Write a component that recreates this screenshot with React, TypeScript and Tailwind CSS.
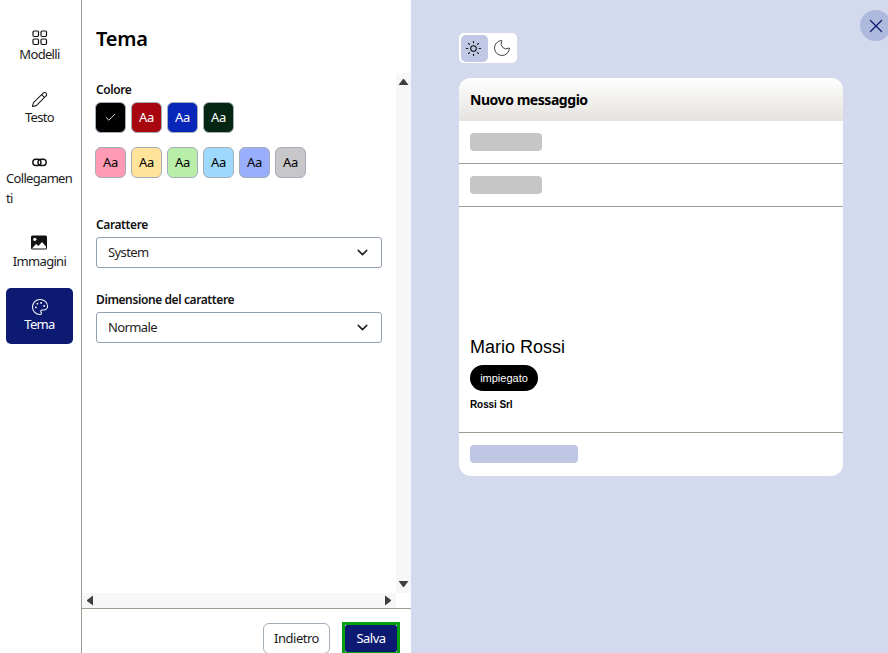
import React from "react";
import { Pencil, Palette, ChevronDown, Check, Sun, Moon, X } from "lucide-react";

const font = "font-['Noto_Sans','Open_Sans',sans-serif]";

function GridIcon() {
  return (
    <svg width="17" height="17" viewBox="0 0 17 17" fill="none" stroke="#111" strokeWidth="1.2" className="mb-[-2px]">
      <rect x="2" y="2" width="5.5" height="5.5" rx="1.2" />
      <rect x="10" y="2" width="5.5" height="5.5" rx="1.2" />
      <rect x="2" y="10" width="5.5" height="5.5" rx="1.2" />
      <rect x="10" y="10" width="5.5" height="5.5" rx="1.2" />
    </svg>
  );
}

function LinkIcon() {
  return (
    <svg width="17" height="17" viewBox="0 0 17 17" fill="none" stroke="#111" strokeWidth="1.4" className="mt-[2px] mb-[-3px]">
      <rect x="1.8" y="5.2" width="8.2" height="6.3" rx="3.1" />
      <rect x="7" y="5.2" width="8.2" height="6.3" rx="3.1" />
    </svg>
  );
}

function ImageIcon() {
  return (
    <svg width="18" height="18" viewBox="0 0 18 18" className="mt-[1px] mb-[-1px] ml-[-1px]">
      <rect x="1" y="1.5" width="16" height="14" rx="1.5" fill="#111" />
      <circle cx="4.8" cy="5.3" r="1.6" fill="#fff" />
      <path d="M2 14.5 L6 10 L8.5 12 L12 8 L16 12.5 L16 14.5 Z" fill="#fff" />
    </svg>
  );
}

function Nav({ icon, label, active, h }: { icon: React.ReactNode; label: string; active?: boolean; h: string }) {
  return (
    <div className={`${h} w-[67px] flex flex-col items-center justify-start rounded-[5px] text-[13px] leading-[20px] tracking-[-0.68px] text-left break-all ${active ? "bg-[#0c1a72] text-white" : "text-[#1c1c1c]"}`}>
      {icon}
      <span>{label}</span>
    </div>
  );
}

function Swatch({ bg, fg, checked }: { bg: string; fg: string; checked?: boolean }) {
  return (
    <div className={`w-[31px] h-[31px] rounded-[6px] border border-[#a3adb8] flex items-center justify-center text-[13px] tracking-[-0.2px] ${bg} ${fg}`}>
      {checked ? <Check size={13} strokeWidth={1.6} /> : "Aa"}
    </div>
  );
}

function Select({ value }: { value: string }) {
  return (
    <div className="w-[286px] h-[31px] rounded-[3px] border border-[#929fae] flex items-center justify-between pl-[11px] pr-[10px] text-[13px] tracking-[-0.6px] text-[#1f1f1f]">
      <span>{value}</span>
      <ChevronDown size={17} strokeWidth={2.2} className="text-[#222]" />
    </div>
  );
}

function Arrow({ dir }: { dir: "up" | "down" | "left" | "right" }) {
  const p =
    dir === "up"
      ? "0.5,9 5,3 6,3 10.5,9"
      : dir === "down"
        ? "0.5,2 10.5,2 6,8 5,8"
        : dir === "left"
          ? "9,0.5 9,10.5 3,6 3,5"
          : "2,0.5 2,10.5 8,6 8,5";
  return (
    <svg width="11" height="11" viewBox="0 0 11 11">
      <polygon points={p} fill="#3f3f3f" />
    </svg>
  );
}

function Row({ className = "" }: { className?: string }) {
  return <div className={`h-[18px] rounded-[4px] ${className}`} />;
}

export default function App() {
  const label = "text-[12px] leading-[17px] font-semibold text-[#111] tracking-[-0.4px]";
  return (
    <div className={`${font} relative w-[888px] h-[653px] flex bg-white overflow-hidden`}>
      <aside className="w-[82px] h-full border-r border-[#a09c92] flex flex-col items-start pl-[6px] pt-[29px] shrink-0">
        <Nav h="h-[60px]" label="Modelli" icon={<GridIcon />} />
        <Nav h="h-[63px]" label="Testo" icon={<Pencil size={17} strokeWidth={1.5} className="mt-[2px] mb-[-1px]" />} />
        <Nav h="h-[81px]" label="Collegamenti" icon={<LinkIcon />} />
        <Nav h="h-[55px]" label="Immagini" icon={<ImageIcon />} />
        <div>
          <Nav h="h-[56px] pt-[10px]" active label="Tema" icon={<Palette size={18} strokeWidth={1.4} className="mb-[-2px]" />} />
        </div>
      </aside>

      <main className="w-[329px] h-full flex flex-col shrink-0">
        <div className="h-[73px] shrink-0 pl-[14px] pt-[25px] text-[20px] leading-[28px] font-semibold text-black tracking-[-0.25px]">Tema</div>
        <div className="flex h-[520px] shrink-0">
          <div className="w-[314px] pl-[14px]">
            <div className={`${label} pt-[8px]`}>Colore</div>
            <div className="flex gap-[5px] mt-[4px] ml-[-1px]">
              <Swatch bg="bg-black" fg="text-white" checked />
              <Swatch bg="bg-[#a80710]" fg="text-white" />
              <Swatch bg="bg-[#0826b8]" fg="text-white" />
              <Swatch bg="bg-[#052612]" fg="text-white" />
            </div>
            <div className="flex gap-[5px] mt-[14px] ml-[-1px]">
              <Swatch bg="bg-[#ff9ab5]" fg="text-black" />
              <Swatch bg="bg-[#ffe49a]" fg="text-black" />
              <Swatch bg="bg-[#b9eea8]" fg="text-black" />
              <Swatch bg="bg-[#9ed8fd]" fg="text-black" />
              <Swatch bg="bg-[#99aefc]" fg="text-black" />
              <Swatch bg="bg-[#c7c6c8]" fg="text-black" />
            </div>
            <div className={`${label} mt-[38px] mb-[4px]`}>Carattere</div>
            <Select value="System" />
            <div className={`${label} mt-[23px] mb-[4px]`}>Dimensione del carattere</div>
            <Select value="Normale" />
          </div>
          <div className="w-[15px] bg-[#f7f7f7] flex flex-col items-center justify-between py-[3px]">
            <Arrow dir="up" />
            <Arrow dir="down" />
          </div>
        </div>
        <div className="h-[15px] shrink-0 w-[314px] bg-[#f7f7f7] flex items-center justify-between pl-[2px] pr-[2px]">
          <Arrow dir="left" />
          <Arrow dir="right" />
        </div>
        <div className="flex-1 min-h-0 overflow-hidden border-t border-[#a09c92] flex justify-end items-start pt-[14px] pr-[11px] gap-[12px]">
          <div className="w-[67px] h-[31px] shrink-0 rounded-[6px] border border-[#a3adb8] flex items-center justify-center text-[13px] tracking-[-0.5px] text-[#1c1c1c] bg-white">Indietro</div>
          <div className="w-[58px] h-[33px] shrink-0 mt-[-1px] border-[3px] border-[#07a010] bg-white">
            <div className="w-full h-full rounded-[2px] bg-[#0c1a72] flex items-center justify-center text-[13px] tracking-[-0.5px] text-white">Salva</div>
          </div>
        </div>
      </main>

      <section className="flex-1 h-full bg-[#d4daed] pl-[48px] pt-[33px]">
        <div className="w-[58px] h-[30px] bg-white rounded-[5px] flex items-center pl-[2px] gap-[4px]">
          <div className="w-[27px] h-[27px] rounded-[5px] bg-[#c0c8e6] flex items-center justify-center pr-[2px]">
            <Sun size={17} strokeWidth={1.5} className="text-[#111]" />
          </div>
          <Moon size={20} strokeWidth={1.2} className="text-[#444]" />
        </div>
        <div className="mt-[15px] w-[384px] h-[398px] bg-white rounded-[12px] overflow-hidden flex flex-col font-['Liberation_Sans',sans-serif]">
          <div className="h-[43px] shrink-0 px-[11px] flex items-center bg-gradient-to-b from-[#ffffff] to-[#e5e3df] text-[14px] font-bold text-black font-['Noto_Sans',sans-serif] tracking-[-0.45px]">Nuovo messaggio</div>
          <div className="h-[43px] shrink-0 border-b border-[#a09c92] px-[11px] pt-[12px]"><Row className="w-[72px] bg-[#c6c6c6]" /></div>
          <div className="h-[43px] shrink-0 border-b border-[#a09c92] px-[11px] pt-[12px]"><Row className="w-[72px] bg-[#c6c6c6]" /></div>
          <div className="h-[226px] shrink-0 border-b border-[#a09c92] px-[11px] pt-[128px]">
            <div className="text-[18px] leading-[24px] text-black">Mario Rossi</div>
            <div className="mt-[6px] w-[68px] h-[26px] rounded-full bg-black text-white text-[11px] flex items-center justify-center">impiegato</div>
            <div className="mt-[7px] text-[10px] leading-[13px] font-bold tracking-[-0.1px] text-black">Rossi Srl</div>
          </div>
          <div className="flex-1 px-[11px] pt-[12px]"><Row className="w-[108px] bg-[#c0c7e4]" /></div>
        </div>
      </section>

      <div className="absolute left-[860px] top-[10px] w-[31px] h-[31px] rounded-full bg-[#adb9dd] flex items-center justify-center text-[#0c1a72]">
        <X size={22} strokeWidth={1.3} />
      </div>
    </div>
  );
}
